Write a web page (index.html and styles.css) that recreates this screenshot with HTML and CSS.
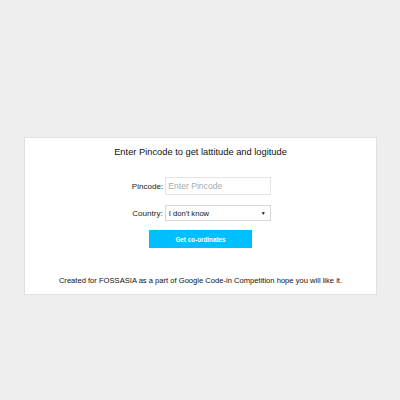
FILE: index.html
```html
<!DOCTYPE html>
<html>
<head>
<meta charset="utf-8">
<link rel="stylesheet" href="styles.css">
</head>
<body>
<div class="page">
  <div class="card">
    <h1 class="title">Enter Pincode to get lattitude and logitude</h1>
    <div class="row row-pin">
      <label class="label">Pincode:</label>
      <input class="field" type="text" placeholder="Enter Pincode">
    </div>
    <div class="row row-country">
      <label class="label">Country:</label>
      <div class="select"><span>I don't know</span><span class="arrow">&#9660;</span></div>
    </div>
    <button class="btn">Get co-ordinates</button>
    <p class="footer">Created for FOSSASIA as a part of Google Code-in Competition hope you will like it.</p>
  </div>
</div>
</body>
</html>
```
FILE: styles.css
```css
html, body {
  margin: 0;
  padding: 0;
  background: #eeeeee;
  font-family: "Liberation Sans", Arial, sans-serif;
}
.page {
  padding: 137px 23px 0 24px;
}
.card {
  background: #fff;
  border: 1px solid #e0e0e0;
  height: 158px;
  box-sizing: border-box;
  display: flex;
  flex-direction: column;
  align-items: center;
  padding-top: 8px;
}
.title {
  margin: 0;
  font-size: 9.3px;
  line-height: 12px;
  font-weight: normal;
  color: #111;
}
.row {
  display: flex;
  align-items: center;
  gap: 2px;
  padding-left: 2px;
}
.row-pin {
  margin-top: 19px;
}
.row-country {
  margin-top: 10px;
}
.label {
  font-size: 8.1px;
  color: #222;
}
.field {
  width: 106px;
  height: 18px;
  box-sizing: border-box;
  border: 1px solid #e4e4e4;
  padding: 0 2px;
  margin: 0;
  font-family: "Liberation Sans", Arial, sans-serif;
  font-size: 8.6px;
  outline: none;
}
.field::placeholder {
  color: #ababab;
}
.select {
  width: 106px;
  height: 16px;
  box-sizing: border-box;
  border: 1px solid #d8d8d8;
  display: flex;
  align-items: center;
  justify-content: space-between;
  padding: 0 4px 0 3px;
  font-size: 7.6px;
  color: #111;
}
.arrow {
  font-size: 5px;
}
.btn {
  margin-top: 9px;
  width: 103px;
  height: 18px;
  border: none;
  background: #00bfff;
  color: #fff;
  font-family: "Liberation Sans", Arial, sans-serif;
  font-size: 6.3px;
  font-weight: bold;
  padding: 0;
}
.footer {
  margin: 28px 0 0 0;
  font-size: 7.6px;
  line-height: 10px;
  color: #111;
}
```
